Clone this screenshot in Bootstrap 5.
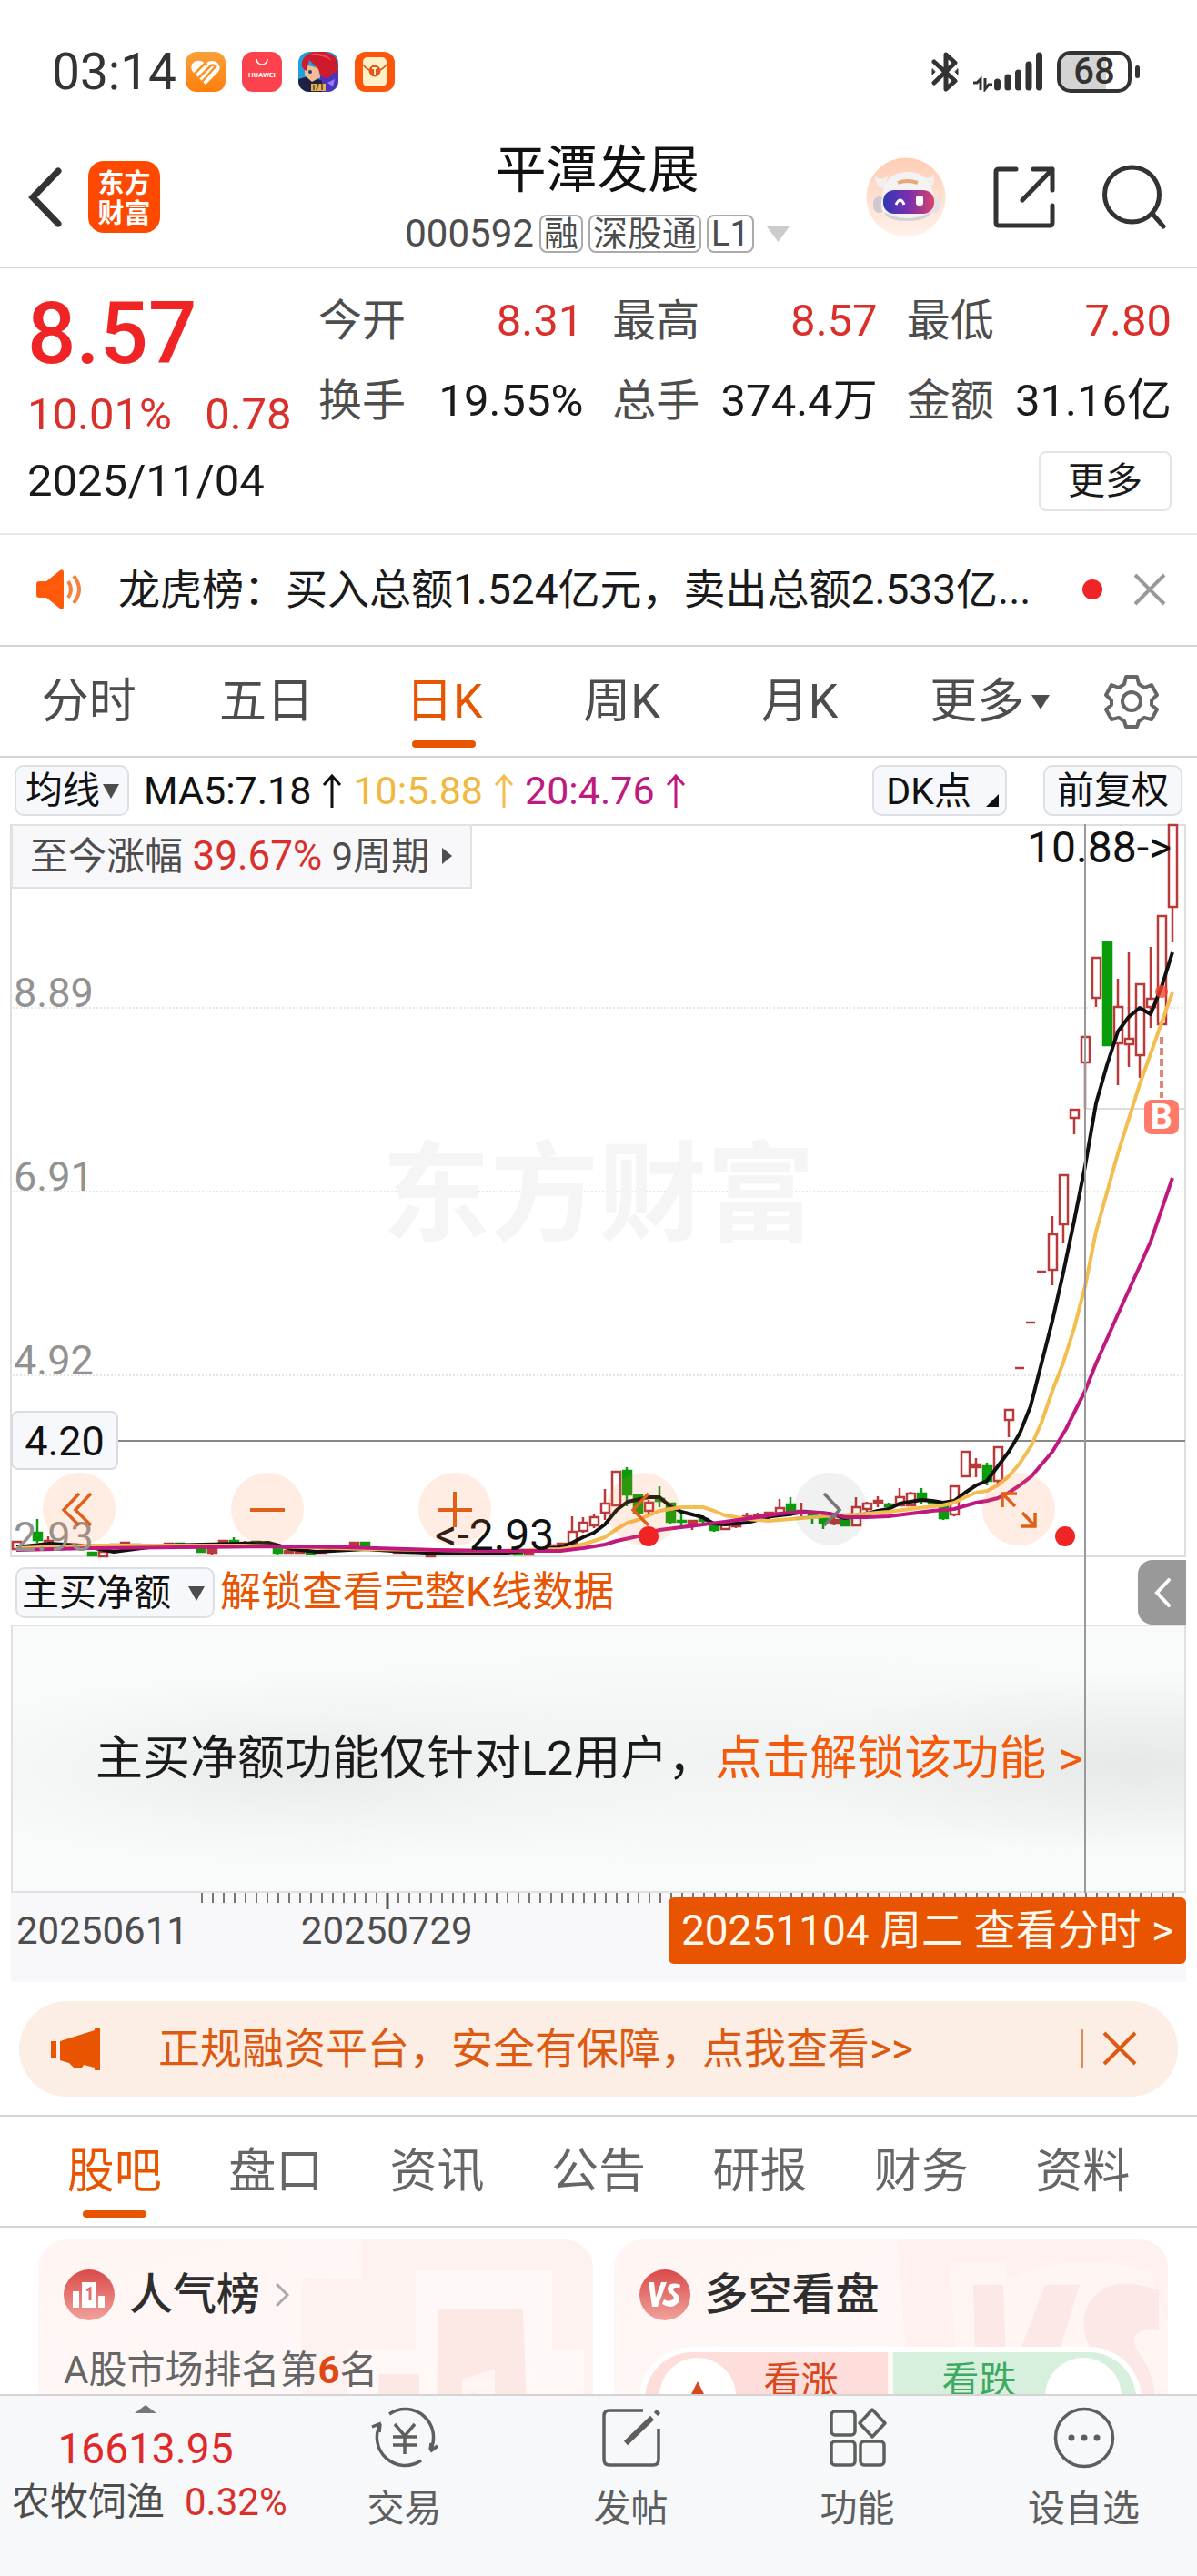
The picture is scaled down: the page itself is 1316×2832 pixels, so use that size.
<!DOCTYPE html>
<html lang="zh-CN">
<head>
<meta charset="utf-8">
<meta name="viewport" content="width=device-width, initial-scale=1">
<title>平潭发展 000592</title>
<link rel="stylesheet" href="https://cdn.jsdelivr.net/npm/bootstrap@5.3.0/dist/css/bootstrap.min.css">
<style>
:root{--ink:#1a1a1a;--dim:#4d4d4d;--up:#d9302c;--brand:#e85400;--line:#d4d4d6;--chip:#f7f8fb}
body{font-family:Roboto,"Noto Sans CJK SC",sans-serif;color:var(--ink);background:#fff;font-size:42px;line-height:60px}
button,select,.btn{font-family:inherit}
svg{display:block;flex:none}
a{color:inherit;text-decoration:none}
.plain{border:0;background:none;padding:0;color:inherit;line-height:inherit;font-size:inherit}
.up{color:var(--up)}.brand{color:var(--brand)}.dim{color:var(--dim)}
.rule{border-bottom:2px solid var(--line)}

.status{padding:57px 63px 0 57px;height:101px;color:#333}
.clock{font-size:55px;line-height:44px;margin-right:10px}
.apps{gap:18px}
.battery{width:82px;height:46px;border:4px solid #333;border-radius:15px;font-size:40px;font-weight:500;line-height:38px;text-align:center;background:linear-gradient(90deg,#d4d4d4 68%,#fff 68%)}
.nub{width:5px;height:14px;background:#333;border-radius:3px;margin-left:4px}

.topbar{padding:54px 34px 15px 31px}
.side{flex:1 1 0}
.side-end{gap:52px}
.side-start{gap:29px}
.stock{font-size:56px;line-height:64px;color:#111;font-weight:400;margin:0 0 17px}
.code{font-size:42px;line-height:42px;gap:6px}
.tagbox{border:2px solid #aaa;border-radius:8px;font-size:38px;line-height:38px;padding:0 3px}
.tri{width:0;height:0;border:10px solid transparent;border-top:16px solid var(--dim);border-bottom:0;display:inline-block}

.quote{padding:28px 28px 24px 30px;font-size:49px;border-bottom:2px solid #e8e8ea}
.lead-col{width:320px}
.price{font-size:94px;line-height:88px;font-weight:500;color:#f02424;margin-bottom:15px}
.figs{display:grid;grid-template-columns:repeat(3,1fr);column-gap:32px;row-gap:28px;align-content:start}
.figs dt{font-size:48px;font-weight:400;color:var(--dim)}
.figs dd{margin:0;font-size:49px}
.day-row{margin-top:10px}
.more-btn{border:2px solid #e4e4e6;border-radius:8px;font-size:41px;line-height:60px;padding:1px 30px;background:#fff;color:var(--ink)}

.notice{padding:30px 34px 31px 40px;font-size:46px}
.notice .msg{margin-left:39px}
.notice .dot{margin-right:34px}
.dot{width:22px;height:22px;border-radius:50%;background:#f02424}

.tabs{font-size:52px;color:var(--dim)}
.tabs .tab{flex:1 1 0;text-align:center;line-height:60px;padding:31px 0 9px;display:flex;flex-direction:column;align-items:center}
.tabs .tab::after{content:"";width:70px;height:8px;border-radius:4px;margin-top:12px}
.tabs .on{color:var(--brand)}
.tabs .on::after{background:var(--brand)}
.with-tri{padding-left:28px}
.kset{width:144px;height:120px;display:flex;align-items:center;justify-content:center}

.tools{padding:8px 16px 9px;gap:16px;line-height:54px}
.chip{background:var(--chip);border:2px solid #dcdfe4;border-radius:10px;font-size:41px;line-height:50px;height:56px;color:#111;padding:0 13px}
.chip-dk{padding-right:7px;margin-right:24px}
.pick{position:relative}
.pick select{appearance:none;padding:0 30px 0 10px}
.pick::after{content:"";position:absolute;right:11px;top:21px;border:9px solid transparent;border-top:16px solid var(--dim);border-bottom:0;pointer-events:none}
.ma{gap:12px;color:#111;font-size:43px}
.ma10{color:#f0b840}.ma20{color:#be1a80}
.corner{width:14px;height:14px;background:#111;clip-path:polygon(100% 0,100% 100%,0 100%)}

.charts{position:relative}
.kline{position:relative}
.kline svg.plot{width:100%;height:auto;overflow:visible}
.gain{position:absolute;left:12px;top:0;background:#f8f8fb;border:2px solid #e0e2e6;line-height:66px;padding:0 45px 0 19px;font-size:42px;color:var(--dim)}
.gain .up{font-size:44px}
.gain::after{content:"";position:absolute;right:20px;top:24px;border:9px solid transparent;border-left:11px solid var(--dim);border-right:0}
.zoomers{position:absolute;left:47px;right:156px;top:713px}
.zoomers button{width:80px;height:80px;border-radius:50%;border:0;padding:0;background:rgba(255,120,60,.14);position:relative}
.zoomers .off{background:rgba(60,60,60,.07)}
.zoomers .dot{position:absolute}
.zoomers .d1{left:35px;top:59px}.zoomers .d2{left:80px;top:59px}
.vline{position:absolute;left:90.6%;width:2px;top:0;bottom:98px;background:#999}
.subbar{padding:11px 12px 7px 17px;gap:6px;font-size:45px;line-height:54px}
.subbar .pick select{padding:0 46px 0 5px}
.drawer{position:absolute;right:0;top:3px;width:53px;height:71px;border:0;background:#999;border-radius:16px 0 0 16px;padding:0 0 0 18px}
.subrow{position:relative;margin-right:12px}
.locked{margin:0 12px;border:2px solid #e0e2e2;height:295px;font-size:52px;padding:0 91px;background:radial-gradient(ellipse 34% 36% at 25% 54%,#e9ebeb 0,rgba(241,243,243,.6) 60%,transparent 100%),radial-gradient(ellipse 30% 34% at 96% 52%,#e7e9e9 0,transparent 100%),radial-gradient(ellipse 60% 40% at 60% 50%,#f1f3f3 0,transparent 100%),#f9fafa}
.locked a{color:#f55a0a}
.axis{margin:0 12px;background:#f8f8fb;height:98px;position:relative;color:var(--dim)}
.axis svg{width:100%;height:20px}
.dates{padding:0 0 0 6px}
.dates span{line-height:44px}
.dates .second{margin-left:124px}
.seeday{position:absolute;right:0;top:5px;background:var(--brand);color:#fff8ee;border-radius:6px;font-size:46px;line-height:73px;padding:0 14px}

.promo{margin:21px 21px 20px;background:#fceee5;border-radius:53px;padding:22px 45px 23px 35px;color:#dc5a12;font-size:46px}
.promo .txt{margin-left:64px}
.bar{width:2px;height:42px;background:#e08a58;margin-right:21px}
.lower{padding:0 37px}
.lower .tab{color:#666}.lower .on{color:var(--brand)}
.cards{padding:13px 32px 0 42px;gap:23px}
.pane{flex:1 1 0;border-radius:32px;background:linear-gradient(160deg,#fff6f4,#fff9f7);position:relative;overflow:hidden;height:240px;padding:31px 28px;color:#666}
.pane h2{font-size:48px;line-height:60px;font-weight:500;color:#2e2e2e;margin:0}
.pane .deco{position:absolute;right:0;top:0}
.pane .body{position:relative}
.headline{gap:16px}
.rank{line-height:54px;margin:26px 0 0}
.rank b{color:#dd4814}
.vote{margin:27px 0 0;border:6px solid #fff;border-bottom:0;border-radius:60px;gap:6px;overflow:hidden;height:116px;width:552px}
.vote button{flex:1 1 0;border:0;display:flex;font-size:41px;line-height:50px;padding:6px 16px 0;justify-content:space-between}
.vote .bull{background:#fddeda;color:#d9481c;padding-right:54px}
.vote .bear{background:#d7f0dd;color:#3faa5f;padding-left:54px}
.vote i{width:84px;height:84px;border-radius:50%;background:#fff;padding-top:26px}
.botnav{background:#f7f8fa;border-top:2px solid var(--line);height:200px;color:#5e5e5e;font-size:41px}
.botnav .idx{width:320px;text-align:center;padding-top:10px;color:#d9302c}
.idx .v{font-size:46px;line-height:54px;margin-top:12px;color:#e02a2a}
.idx .n{line-height:64px;font-size:42px;display:flex;gap:22px;padding-left:13px}
.botnav .item{flex:1 1 0;text-align:center;padding-top:12px;line-height:56px;color:#5e5e5e}
.botnav .item svg{margin:0 auto 16px}
.small-tri{border:12px solid transparent;border-bottom:9px solid #777;border-top:0;width:0;margin:0 auto}
</style>
<script src="https://cdn.jsdelivr.net/npm/bootstrap@5.3.0/dist/js/bootstrap.bundle.min.js"></script>
</head>
<body>

<div class="status d-flex justify-content-between align-items-center">
  <div class="d-flex align-items-center">
    <span class="clock">03:14</span>
    <div class="d-flex apps">
      <svg width="44" height="44" viewBox="0 0 44 44"><defs><linearGradient id="o1" x2="0" y2="1"><stop stop-color="#f9a03a"/><stop offset="1" stop-color="#ff7f0a"/></linearGradient></defs><rect width="44" height="44" rx="12" fill="url(#o1)"/><path d="M22 36L8 22C2 13 13 5 22 13c8-8 20 1 14 9z" fill="#fff"/><path d="M9 25L23 11M13 30L27 16q3-3 6 0L18 33" fill="none" stroke="#fc9222" stroke-width="2.500"/><path d="M21 12l3 3" stroke="#fc9222" stroke-width="2"/></svg>
      <svg width="44" height="44" viewBox="0 0 44 44"><rect width="44" height="44" rx="12" fill="#fb424d"/><path d="M16 8a6 6 0 0 0 12 0" fill="none" stroke="#fff" stroke-width="1.6"/><text x="22" y="28" font-size="8" font-weight="700" text-anchor="middle" fill="#fff">HUAWEI</text></svg>
      <svg width="44" height="44" viewBox="0 0 44 44"><defs><clipPath id="gc"><rect width="44" height="44" rx="12"/></clipPath></defs><g clip-path="url(#gc)"><rect width="44" height="44" fill="#23a0dc"/><path d="M26 20h18v24H20z" fill="#4a35b8"/><path d="M0 30l14-4 12 6v12H0z" fill="#1f2140"/><path d="M7 14l15 4 2 10-9 5-8-7z" fill="#f2bd96"/><path d="M4 12C6 0 22-3 32 1c12 3 14 16 10 22-5-2-5 5-12 6-6-1-6-5-8-10L12 9l-3 12c-4-2-6-5-5-9z" fill="#cf1a2e"/><path d="M12 3c8-3 20-1 25 7-9-6-16-6-25-7z" fill="#f04a55"/><circle cx="13" cy="22" r="2" fill="#2a3a6a"/><path d="M14 35h16v8H14z" fill="#e0b05a"/><path d="M17 36v6M22 35l-2 7M26 35v7" stroke="#6a3a10" stroke-width="1.5"/><path d="M32 34l8-4-2 8z" fill="#9c7bff"/></g></svg>
      <svg width="44" height="44" viewBox="0 0 44 44"><rect width="44" height="44" rx="12" fill="#fb560a"/><rect x="9" y="6" width="26" height="32" rx="5" fill="#fff0c8"/><path d="M9 14q5 7 13 7t13-7" fill="none" stroke="#d4601c" stroke-width="1.6"/><circle cx="22" cy="21" r="6.5" fill="#e0591a"/><path d="M19 18h6M22 18v7" stroke="#fff0c8" stroke-width="1.8"/></svg>
    </div>
  </div>
  <div class="d-flex align-items-center">
    <svg width="30" height="44" viewBox="0 0 30 44" fill="none" stroke="#333" stroke-width="5" stroke-linejoin="round" stroke-linecap="round"><path d="M3 11l23 21-10 9V3l10 9L3 34"/><path d="M1 19v6l3-3zM29 19v6l-3-3z" fill="#333" stroke-width="1"/></svg>
    <svg class="ms-3 me-3" width="76" height="44" viewBox="0 0 76 44" fill="none" stroke="#333" stroke-linecap="round"><path d="M27 33v6M38.500 28v11M50 23v16M61.500 14v25M73 4v35" stroke-width="7" transform="translate(-.5)"/><path d="M0 34h4l4-4v12M13 29v12l4-5h4" stroke-width="3" stroke-linecap="butt"/></svg>
    <div class="battery">68</div><div class="nub"></div>
  </div>
</div>

<header class="topbar rule d-flex align-items-center">
  <div class="side side-start d-flex align-items-center">
    <button class="plain" aria-label="返回"><svg width="37" height="66" viewBox="0 0 37 66" fill="none" stroke="#333" stroke-width="7" stroke-linecap="round"><path d="M33 4L5 33l28 29"/></svg></button>
    <svg width="80" height="80" viewBox="0 0 80 80"><rect width="79" height="79" rx="17" fill="#ff4800"/><g font-size="29" font-weight="700" fill="#fff" text-anchor="middle"><text x="39.500" y="35">东方</text><text x="39.500" y="68">财富</text></g></svg>
  </div>
  <div class="text-center">
    <h1 class="stock">平潭发展</h1>
    <div class="code d-flex align-items-center justify-content-center dim">
      <span>000592</span><span class="tagbox">融</span><span class="tagbox">深股通</span><span class="tagbox">L1</span>
      <svg class="ms-2" width="25" height="17"><path d="M0 0h25L12.500 17z" fill="#ccc"/></svg>
    </div>
  </div>
  <div class="side side-end d-flex align-items-center justify-content-end">
    <button class="plain" aria-label="助手"><svg width="88" height="88" viewBox="0 0 88 88"><defs><linearGradient id="rb" x2="0" y2="1"><stop stop-color="#ffcdb4"/><stop offset="1" stop-color="#fff2ec"/></linearGradient><linearGradient id="vs"><stop stop-color="#3038b4"/><stop offset=".5" stop-color="#7a2fae"/><stop offset="1" stop-color="#d84468"/></linearGradient></defs><circle cx="44" cy="44" r="43.500" fill="url(#rb)"/><path d="M10 21q8 6 14-1l-3 14q-11-1-11-13zM74 18q-2 6-9 4l3 12q10-4 6-16z" fill="#f3efef"/><rect x="8" y="43" width="14" height="18" rx="7" fill="#cfcad2"/><rect x="68" y="43" width="13" height="18" rx="6" fill="#e4e0e4"/><path d="M18 44Q20 16 46 16t29 30q2 24-31 24T18 44z" fill="#f4f2f3"/><path d="M20 60q24 14 52 0-4 10-27 10T20 60z" fill="#d5d2d6"/><path d="M35 28q10-4 22 0" stroke="#e6a978" stroke-width="4" fill="none"/><rect x="19" y="36" width="56" height="26" rx="12" fill="url(#vs)"/><path d="M33 52q5-10 9 0" stroke="#fff" stroke-width="3" fill="none"/><rect x="55" y="42" width="8" height="11" rx="3" fill="#fff"/></svg></button>
    <button class="plain" aria-label="分享"><svg width="68" height="68" viewBox="0 0 68 68" fill="none" stroke="#333" stroke-width="5" stroke-linecap="round" stroke-linejoin="round"><path d="M25 3H6q-3 0-3 3v56q0 3 3 3h56q3 0 3-3V43M44 3h21v23M65 3L32 37"/></svg></button>
    <button class="plain" aria-label="搜索"><svg width="70" height="71" viewBox="0 0 70 71" fill="none" stroke="#333" stroke-width="5" stroke-linecap="round"><circle cx="32.500" cy="33" r="30"/><path d="M55 54l12 14"/></svg></button>
  </div>
</header>

<section class="quote">
  <div class="d-flex">
    <div class="lead-col">
      <div class="price">8.57</div>
      <div class="up"><span class="me-4">10.01%</span> <span>0.78</span></div>
    </div>
    <dl class="figs flex-grow-1 mb-0">
      <div class="d-flex justify-content-between"><dt>今开</dt><dd class="up">8.31</dd></div>
      <div class="d-flex justify-content-between"><dt>最高</dt><dd class="up">8.57</dd></div>
      <div class="d-flex justify-content-between"><dt>最低</dt><dd class="up">7.80</dd></div>
      <div class="d-flex justify-content-between"><dt>换手</dt><dd>19.55%</dd></div>
      <div class="d-flex justify-content-between"><dt>总手</dt><dd>374.4万</dd></div>
      <div class="d-flex justify-content-between"><dt>金额</dt><dd>31.16亿</dd></div>
    </dl>
  </div>
  <div class="day-row d-flex justify-content-between align-items-center">
    <span>2025/11/04</span>
    <button class="more-btn">更多</button>
  </div>
</section>

<section class="notice rule d-flex align-items-center">
  <svg width="51" height="44" viewBox="0 0 51 44"><path d="M0 16q0-3 3-3h8L26 1q4-2 4 2v38q0 4-4 2L11 31H3q-3 0-3-3z" fill="#ff5a0a"/><path d="M35 13q6 9 0 18M41 7q12 15 0 30" fill="none" stroke="#f5813e" stroke-width="4"/></svg>
  <a href="#" class="msg text-nowrap">龙虎榜：买入总额1.524亿元，卖出总额2.533亿...</a>
  <span class="dot ms-auto"></span>
  <button class="plain" aria-label="关闭"><svg width="36" height="36" stroke="#999" stroke-width="4"><path d="M2 2l32 32M34 2L2 34"/></svg></button>
</section>

<nav class="tabs rule d-flex">
  <a href="#" class="tab">分时</a><a href="#" class="tab">五日</a><a href="#" class="tab on">日K</a><a href="#" class="tab">周K</a><a href="#" class="tab">月K</a>
  <a href="#" class="tab"><span class="with-tri d-flex align-items-center gap-2">更多<i class="tri"></i></span></a>
  <button class="plain kset" aria-label="设置"><svg width="60" height="60" viewBox="0 0 60 60" fill="none" stroke="#666" stroke-width="4" stroke-linejoin="round"><circle cx="30" cy="30" r="10"/><path d="M24 3h12l2 8 6 4 8-3 6 11-6 6v5l6 5-6 11-8-2-6 4-2 6H24l-2-6-6-4-8 2-6-11 6-5v-5l-6-6 6-11 8 3 6-4z"/></svg></button>
</nav>

<section class="tools d-flex align-items-center">
  <div class="pick d-flex"><label class="visually-hidden" for="ind">指标</label><select id="ind" class="chip"><option>均线</option></select></div>
  <div class="ma d-flex align-items-center">
    <span>MA5:7.18</span><svg width="22" height="38" fill="none" stroke="#111" stroke-width="3"><path d="M11 38V3M2 13l9-10 9 10"/></svg>
    <span class="ma10">10:5.88</span><svg width="22" height="38" fill="none" stroke="#f5bd4d" stroke-width="3"><path d="M11 38V3M2 13l9-10 9 10"/></svg>
    <span class="ma20">20:4.76</span><svg width="22" height="38" fill="none" stroke="#be1a80" stroke-width="3"><path d="M11 38V3M2 13l9-10 9 10"/></svg>
  </div>
  <div class="d-flex ms-auto">
    <button class="chip chip-dk ms-auto d-flex align-items-end">DK点<span class="corner ms-3 mb-2"></span></button>
    <button class="chip ms-3">前复权</button>
  </div>
</section>

<main class="charts">
  <div class="kline">
    <svg class="plot" viewBox="0 907 1316 806">
      <g fill="none" stroke="#dedede" stroke-width="2"><path d="M12 908H1303V1712H12z"/><path d="M14 1109H1302M14 1311H1302M14 1513H1302" stroke-dasharray="2 2" stroke="#e6e6e6"/></g>
      <text x="658" y="1356" font-size="119" font-weight="700" text-anchor="middle" fill="#f5f5f6">东方财富</text>
      <path d="M129 1585H1303" stroke="#888" stroke-width="2"/><path d="M1193 1220H1303" stroke="#ddd" stroke-width="2"/>
      <g id="bars" stroke-width="2.500"></g>
      <g fill="none" stroke-width="4" stroke-linejoin="round">
        <polyline stroke="#111" points="18,1702 54,1698 89,1700 125,1707 179,1700 268,1698 295,1697 321,1704 348,1707 402,1704 446,1707 491,1709 522,1709 558,1708 617,1702 629,1697 641,1691 653,1686 665,1677 678,1661 690,1652 713,1647 725,1647 737,1657 749,1663 761,1666 772,1669 785,1676 797,1677 821,1675 848,1668 866,1666 884,1663 911,1665 929,1670 946,1667 965,1662 977,1660 989,1654 1001,1652 1013,1650 1025,1651 1037,1653 1049,1651 1061,1642 1073,1634 1085,1629 1097,1613 1109,1597 1121,1577 1133,1547 1145,1500 1157,1453 1169,1400 1181,1343 1193,1283 1205,1214 1217,1172 1229,1135 1241,1119 1253,1109 1265,1116 1277,1086 1289,1048"/>
        <polyline stroke="#f3bd50" points="18,1703 100,1700 268,1700 402,1704 540,1706 616,1704 629,1702 653,1695 665,1691 678,1682 690,1675 701,1672 725,1662 749,1658 773,1658 785,1662 797,1667 821,1671 845,1673 869,1671 905,1668 941,1666 977,1663 1001,1660 1036,1656 1049,1653 1061,1647 1073,1642 1085,1640 1097,1634 1109,1624 1121,1610 1134,1590 1145,1565 1157,1530 1169,1499 1181,1461 1193,1415 1205,1355 1229,1269 1253,1193 1289,1092"/>
        <polyline stroke="#c0187f" points="18,1705 100,1703 200,1702 300,1701 380,1702 480,1705 540,1706 616,1706 641,1703 665,1699 678,1695 701,1690 725,1683 749,1680 773,1677 797,1674 833,1669 857,1665 881,1663 902,1664 917,1666 929,1669 953,1669 977,1668 1001,1665 1025,1662 1049,1660 1073,1653 1085,1651 1097,1648 1109,1642 1121,1634 1134,1624 1157,1597 1172,1572 1193,1530 1205,1500 1229,1446 1253,1393 1265,1366 1289,1296"/>
      </g>
      <circle cx="1277" cy="1091" r="7" fill="#f5442e" opacity=".8"/><path d="M1277 1141V1208" stroke="#e08878" stroke-width="4" stroke-dasharray="8 4"/>
      <rect x="1258" y="1210" width="38" height="38" rx="8" fill="#ff7a6a"/><text x="1277" y="1242" font-size="38" font-weight="700" text-anchor="middle" fill="#fff">B</text>
      <g font-size="45" fill="#929292"><text x="15" y="1108">8.89</text><text x="15" y="1310">6.91</text><text x="15" y="1512">4.92</text><text x="15" y="1706">2.93</text></g>
      <g font-size="48" fill="#111"><text x="1288" y="949" text-anchor="end">10.88-&gt;</text><text x="478" y="1705">&lt;-2.93</text></g>
      <rect x="13" y="1553" width="116" height="63" rx="7" fill="#f7f8fb" stroke="#d8dbe0" stroke-width="2"/><text x="71" y="1601" font-size="45" text-anchor="middle" fill="#111">4.20</text>
    </svg>
    <div class="gain">至今涨幅 <span class="up">39.67%</span> 9周期</div>
    <div class="zoomers d-flex justify-content-between">
      <button aria-label="最早"><svg width="80" height="80" fill="none" stroke="#e0601a" stroke-width="3.500"><path d="M40 23L23 41l17 17M53 23L36 41l17 17"/></svg></button>
      <button aria-label="缩小"><svg width="80" height="80" stroke="#e0601a" stroke-width="4"><path d="M21 41h38"/></svg></button>
      <button aria-label="放大"><svg width="80" height="80" stroke="#e0601a" stroke-width="4"><path d="M21 41h38M40 21v39"/></svg></button>
      <button aria-label="左移"><svg width="80" height="80" fill="none" stroke="#e0601a" stroke-width="3.500"><path d="M46 23L29 41l17 17"/></svg><span class="dot d1"></span></button>
      <button class="off" aria-label="右移"><svg width="80" height="80" fill="none" stroke="#777" stroke-width="3.500"><path d="M33 23l17 18-17 17"/></svg></button>
      <button aria-label="全屏"><svg width="80" height="80" fill="none" stroke="#e0601a" stroke-width="3.500"><path d="M22 38V23h16M22 23l14 14M58 44v15H42M58 59L44 44"/></svg><span class="dot d2"></span></button>
    </div>
  </div>
  <div class="subrow">
    <div class="subbar d-flex align-items-center">
      <div class="pick d-flex"><label class="visually-hidden" for="sub">副图</label><select id="sub" class="chip"><option>主买净额</option></select></div>
      <a href="#" class="brand">解锁查看完整K线数据</a>
    </div>
    <button class="drawer" aria-label="展开"><svg width="19" height="32" fill="none" stroke="#fff" stroke-width="4" stroke-linecap="round"><path d="M16 2L3 16l13 14"/></svg></button>
  </div>
  <div class="locked d-flex align-items-center text-nowrap">主买净额功能仅针对L2用户，<a href="#">点击解锁该功能 &gt;</a></div>
  <div class="axis">
    <svg viewBox="0 0 1292 20" preserveAspectRatio="none"><path id="ticks" stroke="#777" stroke-width="2"/><path d="M414 0v18" stroke="#555" stroke-width="3"/></svg>
    <div class="dates d-flex"><span>20250611</span><span class="second">20250729</span></div>
    <a href="#" class="seeday">20251104 周二 查看分时 &gt;</a>
  </div>
  <div class="vline"></div>
</main>

<section class="promo d-flex align-items-center">
  <svg width="54" height="47" viewBox="0 0 54 47" fill="#e85400"><path d="M0 15h6v18H0zM10 15L48 3V0h6v47h-6v-3l-12-3q-2 5-7 3l-3 1-6-6-10-3z"/></svg>
  <a href="#" class="txt">正规融资平台，安全有保障，点我查看&gt;&gt;</a>
  <span class="bar ms-auto"></span>
  <button class="plain" aria-label="关闭"><svg width="38" height="38" stroke="#dc5a12" stroke-width="4"><path d="M2 2l34 34M36 2L2 36"/></svg></button>
</section>
<div class="rule"></div>
<nav class="tabs lower rule d-flex">
  <a href="#" class="tab on">股吧</a><a href="#" class="tab">盘口</a><a href="#" class="tab">资讯</a><a href="#" class="tab">公告</a><a href="#" class="tab">研报</a><a href="#" class="tab">财务</a><a href="#" class="tab">资料</a>
</nav>

<section class="cards d-flex">
  <article class="pane">
    <svg class="deco" width="320" height="240" viewBox="0 0 320 240"><path d="M65 0H320V240H0V44H65z" fill="#fef2f0"/><path d="M50 120H125V34H275V120H310V240H50z" fill="#fff8f6"/><path d="M85 148h44v92H80zM150 77h93l6 163H147zM266 184h36l4 56h-40z" fill="#fce8e5"/><path d="M176 154l36-12v98h-22v-72l-14 4z" fill="#fff6f4"/></svg>
    <div class="body">
      <div class="headline d-flex align-items-center"><svg width="56" height="56" viewBox="0 0 56 56"><defs><linearGradient id="rd" x2="0" y2="1"><stop stop-color="#d94a48"/><stop offset="1" stop-color="#f0a29c"/></linearGradient></defs><circle cx="28" cy="28" r="28" fill="url(#rd)"/><path d="M10 24h7v18h-7zM20 14h15v28H20zM38 29h7v13h-7z" fill="#fff"/><path d="M25 23l4-2v13" stroke="#e0706a" stroke-width="3" fill="none"/></svg>
      <h2>人气榜</h2><svg width="17" height="28" fill="none" stroke="#aaa" stroke-width="3"><path d="M2 2l12 12L2 26"/></svg></div>
      <p class="rank">A股市场排名第<b>6</b>名</p>
    </div>
  </article>
  <article class="pane">
    <svg class="deco" width="300" height="240" viewBox="0 0 300 240"><path d="M3 0H300V240H20z" fill="#fef1ef"/><path d="M60 25h60l4 20Q190 10 280 35l20 60v145H75z" fill="#fff6f4"/><path d="M86 50h33l4 110 42-110h38l-58 190H90zM290 56q-60-22-80 20-10 30 20 66 15 25 0 60v38h40q30-60 5-105-30-40 15-35z" fill="#fce9e7"/></svg>
    <div class="body">
      <div class="headline d-flex align-items-center"><svg width="56" height="56" viewBox="0 0 56 56"><circle cx="28" cy="28" r="28" fill="url(#rd)"/><path d="M10 14h6l2 17 6-17h6L20 41h-6zM45 17q-11-4-14 3-1 4 5 8 4 4-1 6-3 2-8-1l-2 5q11 7 18-2 3-6-4-11-4-4 0-5 3-1 5 1z" fill="#fff"/></svg><h2>多空看盘</h2></div>
      <div class="vote d-flex"><button class="bull"><i><svg class="mx-auto" width="20" height="20"><path d="M10 0l10 20H0z" fill="#d9481c"/></svg></i>看涨</button><button class="bear">看跌<i></i></button></div>
    </div>
  </article>
</section>

<footer class="botnav fixed-bottom d-flex">
  <a href="#" class="idx"><div class="small-tri"></div><div class="v">16613.95</div><div class="n"><span class="dim">农牧饲渔</span><span>0.32%</span></div></a>
  <a href="#" class="item"><svg width="76" height="68" viewBox="0 0 76 68" fill="none" stroke="#5e5e5e" stroke-width="3.500"><path d="M21 8A31 31 0 0 1 66 48l1-8M66 49l8-6M56 59A31 31 0 0 1 11 19L10 28M12 18L2 22M27 19l11 13 11-13M38 32v20M25 33h26M25 42h26"/></svg>交易</a>
  <a href="#" class="item"><svg width="68" height="68" viewBox="0 0 68 68" fill="none" stroke="#5e5e5e" stroke-width="3.500"><path d="M47 4H10q-6 0-6 6v48q0 6 6 6h48q6 0 6-6V24"/><path d="M28 40L57 12M61 8l3-3" stroke-width="6"/></svg>发帖</a>
  <a href="#" class="item"><svg width="68" height="68" viewBox="0 0 68 68" fill="none" stroke="#5e5e5e" stroke-width="3.500"><rect x="5" y="5" width="26" height="26" rx="4"/><rect x="5" y="38" width="26" height="26" rx="4"/><rect x="37" y="38" width="26" height="26" rx="4"/><path d="M50 3l14 15-14 15-14-15z" stroke-linejoin="round"/></svg>功能</a>
  <a href="#" class="item"><svg width="68" height="68" viewBox="0 0 68 68"><circle cx="34" cy="34" r="31.500" fill="none" stroke="#5e5e5e" stroke-width="3.500"/><g fill="#5e5e5e"><circle cx="20" cy="34" r="3.500"/><circle cx="34" cy="34" r="3.500"/><circle cx="48" cy="34" r="3.500"/></g></svg>设自选</a>
</footer>

<script>
// x, high, body top, body bottom, low, direction (r = rise, g = fall)
const days=[
[18,1696,1696,1704,1704,'r'],[41,1671,1686,1694,1697,'g'],[53,1690,1695,1700,1702,'r'],[101,1708,1708,1711,1711,'g'],[113,1706,1707,1712,1712,'r'],[125,1699,1699,1700,1701,'r'],[137,1696,1697,1700,1702,'r'],[149,1699,1699,1701,1701,'g'],[185,1697,1698,1700,1700,'r'],[197,1698,1698,1700,1700,'g'],[221,1704,1704,1707,1707,'g'],[233,1703,1704,1708,1710,'r'],[245,1695,1695,1699,1699,'r'],[257,1691,1695,1696,1700,'g'],[269,1695,1697,1698,1699,'r'],[281,1695,1696,1698,1698,'g'],[305,1704,1704,1708,1710,'g'],[317,1706,1706,1708,1708,'r'],[329,1706,1706,1708,1708,'r'],[341,1705,1707,1709,1710,'g'],[353,1707,1707,1708,1708,'r'],[389,1697,1697,1700,1700,'r'],[401,1696,1697,1700,1700,'g'],[437,1706,1706,1708,1708,'r'],[449,1706,1707,1708,1709,'g'],[473,1709,1709,1712,1712,'r'],[569,1708,1709,1710,1711,'g'],[581,1708,1709,1710,1710,'r'],[605,1697,1700,1704,1704,'r'],
[617,1698,1698,1702,1702,'r'],[629,1668,1685,1698,1698,'r'],[641,1669,1675,1684,1686,'r'],[653,1666,1669,1678,1681,'r'],[665,1638,1654,1664,1672,'r'],[677,1619,1619,1656,1656,'r'],[689,1614,1618,1644,1657,'g'],[701,1643,1645,1664,1664,'g'],[713,1650,1653,1662,1665,'r'],[725,1635,1649,1651,1658,'g'],[737,1653,1654,1674,1676,'g'],[749,1663,1673,1674,1678,'g'],[761,1672,1673,1675,1683,'r'],[773,1667,1671,1673,1676,'g'],[785,1676,1678,1683,1685,'g'],[797,1676,1677,1682,1683,'r'],[809,1675,1676,1679,1681,'r'],[821,1664,1668,1671,1672,'r'],[833,1664,1667,1669,1670,'r'],[845,1663,1664,1668,1669,'r'],[857,1649,1659,1665,1667,'r'],[869,1647,1655,1663,1668,'g'],[881,1653,1662,1664,1672,'r'],[893,1663,1667,1669,1677,'g'],[905,1666,1669,1675,1682,'g'],[917,1669,1672,1676,1678,'r'],[929,1668,1670,1678,1679,'g'],[941,1647,1658,1678,1679,'r'],[953,1652,1654,1660,1668,'r'],[965,1646,1651,1653,1658,'r'],[977,1653,1655,1657,1660,'g'],[989,1637,1647,1656,1657,'r'],[1001,1641,1643,1656,1657,'r'],[1013,1637,1643,1650,1654,'g'],[1025,1652,1653,1654,1655,'g'],[1037,1653,1656,1670,1672,'g'],[1049,1634,1635,1666,1668,'r'],[1061,1597,1597,1624,1625,'r'],[1073,1604,1611,1614,1625,'r'],[1085,1609,1613,1629,1634,'g'],[1097,1592,1592,1629,1635,'r'],[1109,1551,1551,1562,1581,'r'],
[1121,1505,1505,1505,1505,'r'],[1133,1455,1455,1455,1455,'r'],[1145,1399,1399,1399,1399,'r'],[1157,1338,1358,1397,1414,'r'],[1169,1293,1293,1347,1367,'r'],[1181,1221,1221,1230,1248,'r'],[1193,1141,1141,1169,1220,'r'],[1205,1054,1054,1098,1108,'r'],[1217,1035,1037,1150,1150,'g'],[1229,1077,1108,1148,1194,'r'],[1241,1048,1143,1149,1174,'r'],[1253,1083,1083,1161,1186,'r'],[1265,1042,1099,1108,1131,'r'],[1277,1008,1008,1127,1127,'r'],[1289,908,908,998,1037,'r']];
document.getElementById('bars').innerHTML=days.map(([x,h,t,b,l,d])=>{
  const c=d==='r'?'#b93a38':'#0a9c0a';
  if(t===b) return `<path d="M${x-5} ${t}h10" stroke="${c}"/>`;
  const f=d==='r'?(b-t>4?'#fff':c):c;
  return `<path d="M${x} ${h}V${t}M${x} ${b}V${l}" stroke="${c}"/><rect x="${x-4}" y="${t}" width="9" height="${b-t}" fill="${f}" stroke="${c}"/>`;
}).join('');
let p='';for(let x=210;x<1290;x+=12)p+=`M${x} 0v11`;
document.getElementById('ticks').setAttribute('d',p);
</script>
</body>
</html>
